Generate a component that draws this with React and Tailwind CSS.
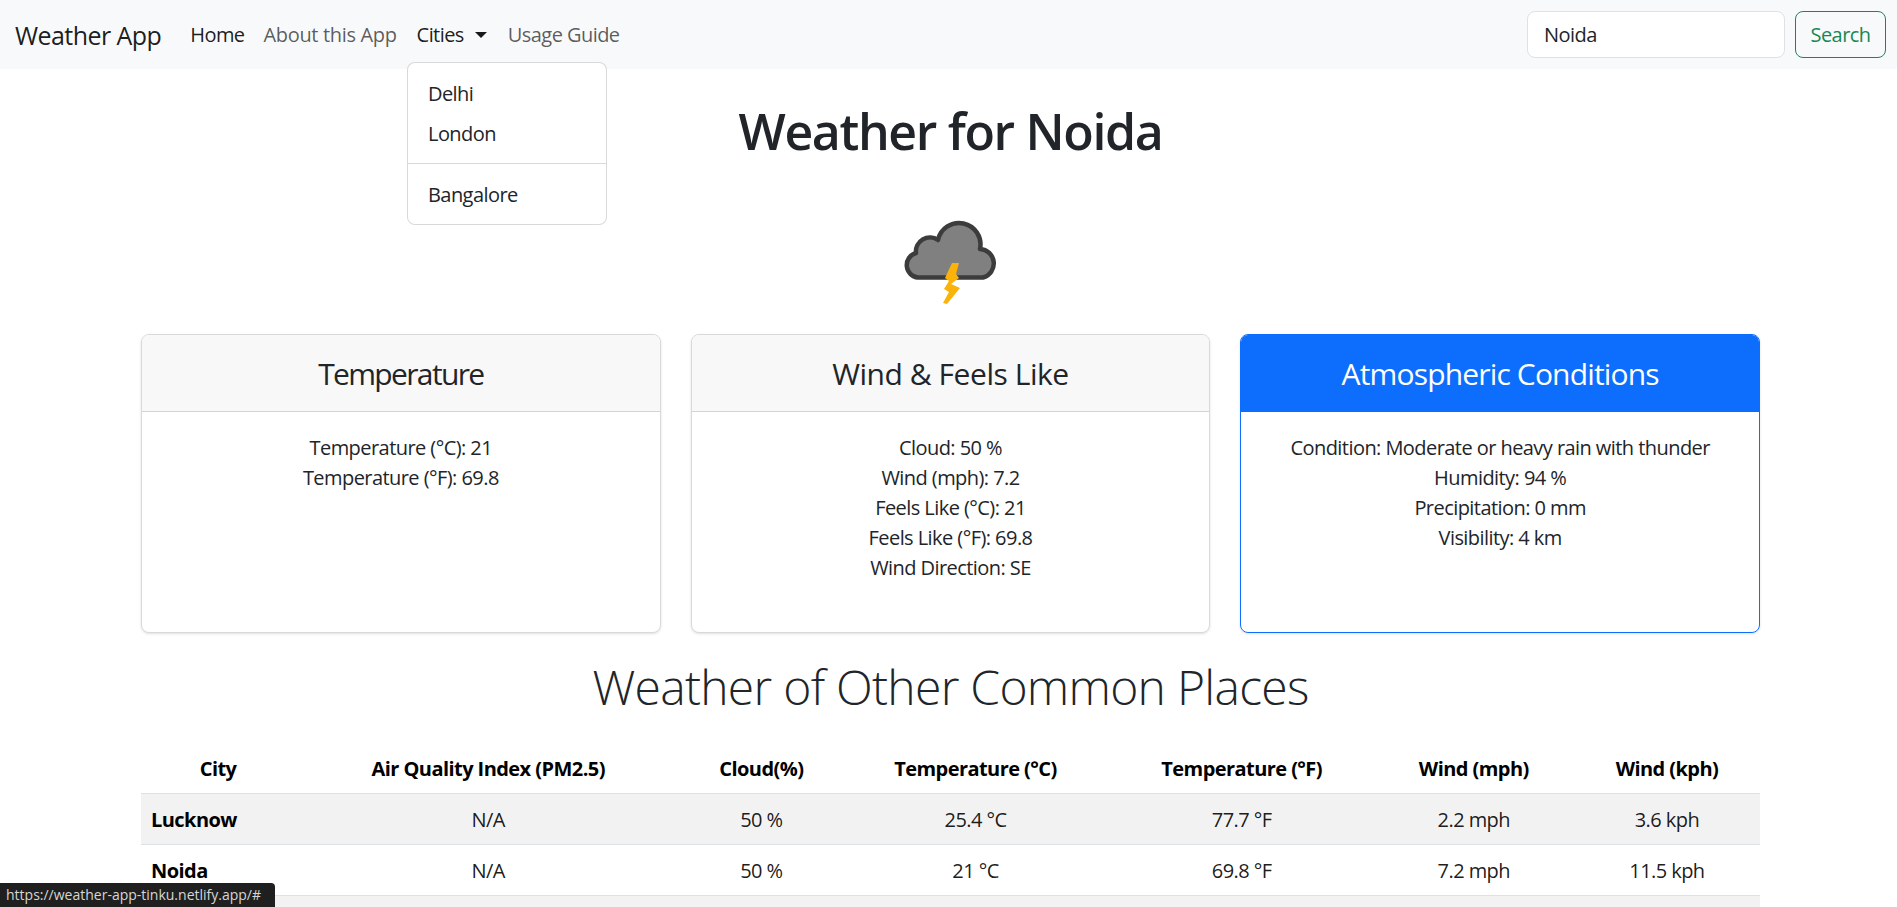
const rows = [
  ['Lucknow', 'N/A', '50 %', '25.4 °C', '77.7 °F', '2.2 mph', '3.6 kph'],
  ['Noida', 'N/A', '50 %', '21 °C', '69.8 °F', '7.2 mph', '11.5 kph'],
]

const columns = ['City', 'Air Quality Index (PM2.5)', 'Cloud(%)', 'Temperature (°C)', 'Temperature (°F)', 'Wind (mph)', 'Wind (kph)']
const widths = ['w-[154px]', 'w-[386px]', 'w-[160px]', 'w-[268px]', 'w-[264px]', 'w-[200px]', 'w-[186px]']

const cards = [
  { title: 'Temperature', titleClass: 'tracking-[-0.055em]', lines: ['Temperature (°C): 21', 'Temperature (°F): 69.8'] },
  { title: 'Wind & Feels Like', titleClass: 'tracking-[-0.015em]', lines: ['Cloud: 50 %', 'Wind (mph): 7.2', 'Feels Like (°C): 21', 'Feels Like (°F): 69.8', 'Wind Direction: SE'] },
  { title: 'Atmospheric Conditions', titleClass: 'tracking-[-0.028em]', primary: true, lines: ['Condition: Moderate or heavy rain with thunder', 'Humidity: 94 %', 'Precipitation: 0 mm', 'Visibility: 4 km'] },
]

const StormIcon = () => (
  <svg viewBox="0 0 120 100" className="w-[120px] h-[100px] block blur-[0.5px]">
    <path
      d="M27 64.5 A12.5 12.5 0 0 1 25 40 A14 14 0 0 1 47 27 A21 21 0 0 1 89 36 A14.5 14.5 0 0 1 92 64.5 Z"
      fill="#808080"
      stroke="#3c3c3c"
      strokeWidth="4.5"
      strokeLinejoin="round"
    />
    <path d="M61 50 L68 50 L65 61 L68 65 L60 71 L69 75 L56 91 L52 90 L58 79 L53 76 L58 68 L54 65 Z" fill="#fbb30a" />
  </svg>
)

const App = () => {
  return (
    <div className="relative h-[907px] overflow-hidden bg-white text-[20px] leading-[30px] text-[#212529] font-['Open_Sans',sans-serif] tracking-[-0.028em]">
      {/* Navbar */}
      <nav className="h-[69px] bg-[#f8f9fa] flex items-center pl-[15px] pr-[11px]">
        <a href="#" className="text-[25px] text-black/90 mr-[19px]">Weather App</a>
        <a href="#" className="px-[10px] text-black/90">Home</a>
        <a href="#" className="pl-[9px] pr-[10px] text-black/65 tracking-[-0.017em]">About this App</a>
        <a href="#" className="px-[10px] text-black/90 flex items-center">
          Cities
          <span className="ml-[11px] border-x-[6px] border-x-transparent border-t-[6px] border-t-black/90"></span>
        </a>
        <a href="#" className="pl-[11px] pr-[10px] text-black/65">Usage Guide</a>
        <div className="ml-auto flex gap-[10px]">
          <input
            readOnly
            value="Noida"
            className="w-[258px] h-[47px] bg-white border border-[#dee2e6] rounded-[8px] px-[16px] outline-none"
          />
          <button className="w-[91px] h-[47px] border border-[#198754] rounded-[8px] text-[#198754]">Search</button>
        </div>
      </nav>

      {/* Cities dropdown */}
      <div className="absolute left-[407px] top-[62px] w-[200px] bg-white border border-black/15 rounded-[8px] pt-[11px] pb-[9px]">
        <div className="px-[20px] py-[5px]">Delhi</div>
        <div className="px-[20px] py-[5px]">London</div>
        <div className="mt-[9px] mb-[11px] border-t border-black/15"></div>
        <div className="px-[20px] py-[5px]">Bangalore</div>
      </div>

      <main className="w-[1619px] ml-[141px]">
        <h1 className="mt-[32px] text-center text-[50px] leading-[60px] font-semibold tracking-[-0.027em]">Weather for Noida</h1>
        <div className="mt-[52px] mb-[21px] flex justify-center">
          <StormIcon />
        </div>

        <div className="grid grid-cols-3 gap-[30px]">
          {cards.map(card => (
            <div
              key={card.title}
              className={`h-[299px] rounded-[8px] border shadow-sm overflow-hidden text-center ${
                card.primary ? 'border-[#0d6efd]' : 'border-black/15'
              }`}
            >
              <div
                className={`h-[77px] flex items-center justify-center text-[30px] ${card.titleClass} ${
                  card.primary ? 'bg-[#0d6efd] text-white' : 'bg-[#f8f8f8] border-b border-black/15 pt-[1px]'
                }`}
              >
                {card.title}
              </div>
              <div className="pt-[21px]">
                {card.lines.map(line => (
                  <div key={line}>{line}</div>
                ))}
              </div>
            </div>
          ))}
        </div>

        <h2 className="mt-[18px] text-center text-[48px] leading-[72px] font-light tracking-[-0.015em]">Weather of Other Common Places</h2>

        <table className="mt-[20px] w-full table-fixed border-collapse">
          <thead>
            <tr className="border-b border-[#dee2e6]">
              {columns.map((col, i) => (
                <th key={col} className={`${widths[i]} px-[10px] pt-[11px] pb-[9px] font-bold text-black`}>{col}</th>
              ))}
            </tr>
          </thead>
          <tbody>
            {rows.map((row, idx) => (
              <tr key={row[0]} className={`border-b border-[#dee2e6] ${idx % 2 === 0 ? 'bg-[#f2f2f2]' : ''}`}>
                {row.map((cell, i) =>
                  i === 0 ? (
                    <th key={i} className="px-[10px] pt-[11px] pb-[9px] text-left font-bold text-black">{cell}</th>
                  ) : (
                    <td key={i} className="px-[10px] pt-[11px] pb-[9px] text-center text-black/90">{cell}</td>
                  )
                )}
              </tr>
            ))}
            <tr className="bg-[#f2f2f2]">
              <td colSpan={7} className="h-[51px]"></td>
            </tr>
          </tbody>
        </table>
      </main>

      {/* Browser link status */}
      <div className="absolute left-0 bottom-0 w-[275px] h-[24px] bg-[#1f1f1f] rounded-tr-[4px] pl-[6px] text-[14px] leading-[24px] text-[#d6d6d6] tracking-normal whitespace-nowrap">
        https://weather-app-tinku.netlify.app/#
      </div>
    </div>
  )
}

export default App
